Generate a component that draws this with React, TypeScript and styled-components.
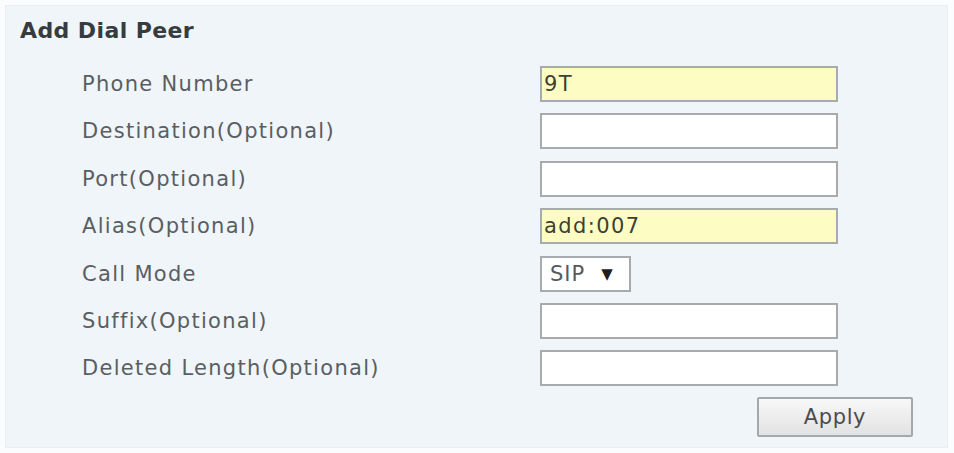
import React, { useState } from 'react';
import styled, { createGlobalStyle } from 'styled-components';

const GlobalStyle = createGlobalStyle`
  html, body {
    margin: 0;
    padding: 0;
    background: #fafcfd;
  }
  body {
    font-family: 'DejaVu Sans', Verdana, sans-serif;
  }
`;

const Page = styled.div`
  width: 954px;
  height: 453px;
  box-sizing: border-box;
  padding: 5px 6px 5px 5px;
`;

const Panel = styled.section`
  height: 100%;
  box-sizing: border-box;
  background: #eff5f8;
  border: 1px solid #e9f0f3;
  padding: 12px 34px 0 14px;
`;

const Title = styled.h2`
  margin: 0;
  font-size: 22px;
  line-height: 26px;
  font-weight: bold;
  color: #363b40;
  letter-spacing: 0.4px;
`;

const Form = styled.div`
  display: grid;
  grid-template-columns: 458px 298px;
  grid-auto-rows: 36px;
  row-gap: 11.4px;
  margin: 22px 0 0 62px;
`;

const Label = styled.label`
  display: flex;
  align-items: center;
  font-size: 21px;
  letter-spacing: 1.3px;
  color: #5a5e62;
`;

const Field = styled.input<{ $filled?: boolean }>`
  box-sizing: border-box;
  width: 100%;
  height: 36px;
  margin: 0;
  padding: 0 2px;
  border: 2px solid #a8abad;
  background: ${p => (p.$filled ? '#fdfdc3' : '#ffffff')};
  font-family: 'DejaVu Sans', Verdana, sans-serif;
  font-size: 21px;
  letter-spacing: 1.4px;
  color: #3f4034;
  outline: none;
`;

const Select = styled.div`
  box-sizing: border-box;
  width: 91px;
  height: 36px;
  display: flex;
  align-items: center;
  gap: 16px;
  padding: 0 8px;
  border: 2px solid #a8abad;
  background: #ffffff;
  font-size: 21px;
  letter-spacing: 1px;
  color: #55595c;
`;

const Caret = styled.span`
  font-size: 15px;
  color: #1e1e1e;
`;

const Actions = styled.div`
  display: flex;
  justify-content: flex-end;
  margin-top: 11px;
`;

const ApplyButton = styled.button`
  width: 156px;
  height: 40px;
  border: 2px solid #a5a8aa;
  border-radius: 2px;
  background: linear-gradient(#f8f8f8, #e2e2e2);
  font-family: 'DejaVu Sans', Verdana, sans-serif;
  font-size: 21px;
  letter-spacing: 0.6px;
  color: #4a4d50;
  cursor: pointer;
`;

type Row = { label: string; value?: string; kind?: 'select' };

const rows: Row[] = [
  { label: 'Phone Number', value: '9T' },
  { label: 'Destination(Optional)' },
  { label: 'Port(Optional)' },
  { label: 'Alias(Optional)', value: 'add:007' },
  { label: 'Call Mode', kind: 'select' },
  { label: 'Suffix(Optional)' },
  { label: 'Deleted Length(Optional)' },
];

const App: React.FC = () => {
  const [values, setValues] = useState<Record<string, string>>(() =>
    Object.fromEntries(rows.map(r => [r.label, r.value ?? '']))
  );

  return (
    <Page>
      <GlobalStyle />
      <Panel>
        <Title>Add Dial Peer</Title>
        <Form>
          {rows.map(row => (
            <React.Fragment key={row.label}>
              <Label>{row.label}</Label>
              {row.kind === 'select' ? (
                <div>
                  <Select>
                    SIP <Caret>▼</Caret>
                  </Select>
                </div>
              ) : (
                <Field
                  $filled={!!row.value}
                  value={values[row.label]}
                  onChange={e => setValues({ ...values, [row.label]: e.target.value })}
                />
              )}
            </React.Fragment>
          ))}
        </Form>
        <Actions>
          <ApplyButton>Apply</ApplyButton>
        </Actions>
      </Panel>
    </Page>
  );
};

export default App;
